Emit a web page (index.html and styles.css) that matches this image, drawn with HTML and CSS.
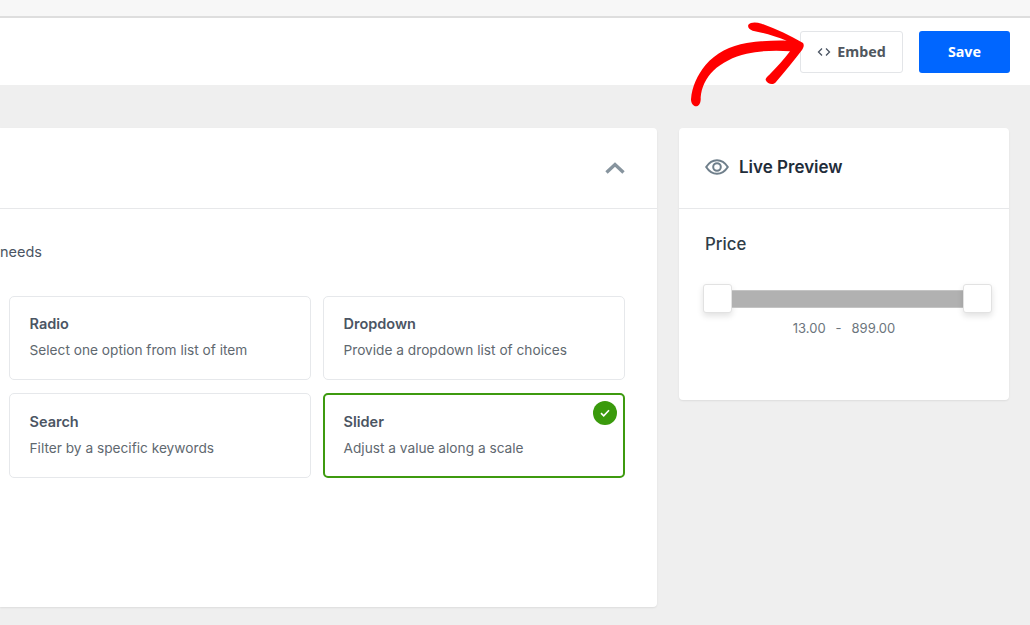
FILE: index.html
```html
<!DOCTYPE html>
<html lang="en">
<head>
<meta charset="utf-8">
<title>Filter settings</title>
<link rel="stylesheet" href="styles.css">
</head>
<body>
<div class="top-strip"></div>
<header class="toolbar">
  <button class="btn btn-embed">
    <svg class="code-icon" width="14" height="10" viewBox="0 0 14 10" fill="none" stroke="#4b5563" stroke-width="1.3"><path d="M5 1.5 1.5 5 5 8.5M9 1.5 12.5 5 9 8.5"/></svg>
    Embed
  </button>
  <button class="btn btn-save">Save</button>
</header>
<main class="content">
  <section class="card main-card">
    <div class="card-head main-head">
      <svg width="20" height="12" viewBox="0 0 20 12" fill="none" stroke="#87949e" stroke-width="3.4"><path d="M1.5 10.5 10 2.5l8.5 8"/></svg>
    </div>
    <div class="main-body">
      <p class="needs">needs</p>
      <div class="options">
        <div class="option"><h3>Radio</h3><p>Select one option from list of item</p></div>
        <div class="option"><h3>Dropdown</h3><p>Provide a dropdown list of choices</p></div>
        <div class="option"><h3>Search</h3><p>Filter by a specific keywords</p></div>
        <div class="option selected">
          <h3>Slider</h3><p>Adjust a value along a scale</p>
          <span class="check"><svg width="10" height="8" viewBox="0 0 10 8" fill="none" stroke="#fff" stroke-width="1.6"><path d="M1 4.2 3.7 6.8 9 1.2"/></svg></span>
        </div>
      </div>
    </div>
  </section>
  <aside class="card side-card">
    <div class="card-head side-head">
      <svg width="24" height="16" viewBox="0 0 24 16" fill="none" stroke="#6f7f8b" stroke-width="2"><path d="M1.2 8C4 3.6 7.6 1.2 12 1.2S20 3.6 22.8 8C20 12.4 16.4 14.8 12 14.8S4 12.4 1.2 8Z"/><circle cx="12" cy="8" r="3.8"/></svg>
      <h2>Live Preview</h2>
    </div>
    <div class="side-body">
      <h3 class="price">Price</h3>
      <div class="slider">
        <span class="handle"></span>
        <span class="track"></span>
        <span class="handle"></span>
      </div>
      <div class="range"><span>13.00</span><span>-</span><span>899.00</span></div>
    </div>
  </aside>
</main>
<svg class="arrow" width="350" height="120" viewBox="0 0 1050 360">
  <path fill="#ff0000" d="M205 74C212 66 228 66 245 71 290 86 330 108 368 128 373 132 372 142 366 150 342 182 314 216 286 248 278 256 262 252 257 240 256 234 262 230 268 224 290 202 312 178 330 154 290 150 240 152 200 161 160 170 125 188 100 212 78 234 64 262 62 292 63 304 60 316 50 319 40 320 33 310 33 298 36 260 52 226 76 196 108 158 150 138 200 129 240 123 280 121 320 122 285 108 250 98 218 92 208 88 202 82 205 74Z"/>
</svg>
</body>
</html>
```
FILE: styles.css
```css
* { box-sizing: border-box; }
html, body { margin: 0; height: 100%; }
body {
  width: 1030px;
  height: 625px;
  overflow: hidden;
  position: relative;
  background: #efefef;
  font-family: Inter, "Liberation Sans", sans-serif;
  color: #4b5563;
}
h2, h3, p { margin: 0; }
.top-strip {
  height: 18px;
  background: #f7f7f7;
  border-bottom: 2px solid #dedede;
}
.toolbar {
  height: 67px;
  background: #fff;
  display: flex;
  justify-content: flex-end;
  align-items: center;
  gap: 16px;
  padding-right: 20px;
}
.btn {
  height: 42px;
  border-radius: 3px;
  font-family: "Noto Sans", sans-serif;
  font-weight: 700;
  font-size: 14.3px;
  display: flex;
  align-items: center;
  justify-content: center;
}
.btn-embed {
  width: 103px;
  gap: 6px;
  background: #fff;
  border: 1px solid #e3e5e8;
  color: #50575e;
}
.btn-save {
  width: 91px;
  background: #0066ff;
  border: 0;
  color: #fff;
}
.content {
  display: flex;
  align-items: flex-start;
  gap: 22px;
  padding-top: 43px;
}
.card {
  background: #fff;
  border-radius: 4px;
  box-shadow: 0 1px 2px rgba(0, 0, 0, .08);
}
.main-card { width: 657px; height: 479px; border-radius: 0 4px 4px 0; }
.side-card { width: 330px; height: 272px; }
.card-head {
  height: 81px;
  border-bottom: 1px solid #e7e8ea;
  display: flex;
  align-items: center;
}
.main-head { justify-content: flex-end; padding: 0 32px 0 0; }
.side-head { gap: 10px; padding: 0 0 3px 26px; }
.side-head h2 { font-size: 17px; font-weight: 600; color: #1f2d3a; }
.main-body { padding: 34px 32px 0 9px; }
.needs { font-size: 14.5px; line-height: 18px; margin-left: -9px; color: #4b5563; }
.options {
  display: grid;
  grid-template-columns: 302px 302px;
  grid-auto-rows: 84.6px;
  gap: 12.9px 12px;
  margin-top: 34.6px;
}
.option {
  position: relative;
  border: 1px solid #e6e8eb;
  border-radius: 5px;
  padding: 18.6px 19.5px 0;
}
.option h3 { font-size: 14.5px; line-height: 18px; font-weight: 600; color: #4b5563; }
.option p { font-size: 13.7px; line-height: 18px; margin-top: 8px; color: #60686f; }
.selected { border: 2px solid #3d9a0f; padding: 17.6px 18.5px 0; }
.check {
  position: absolute;
  top: 6px;
  right: 6px;
  width: 24px;
  height: 24px;
  border-radius: 50%;
  background: #3a9a0c;
  display: flex;
  align-items: center;
  justify-content: center;
}
.side-body { padding: 25px 17px 0 24px; }
.price { font-size: 16.8px; line-height: 20px; font-weight: 500; color: #2f3d48; margin-left: 2px; }
.slider {
  display: flex;
  align-items: center;
  margin-top: 30px;
}
.handle {
  flex: none;
  width: 29px;
  height: 29px;
  background: #fff;
  border: 1px solid #e2e2e2;
  border-radius: 3px;
  box-shadow: 0 3px 6px rgba(0, 0, 0, .12);
}
.track {
  flex: 1;
  height: 18px;
  background: #b1b1b1;
  border-top: 1px solid #c4c4c4;
  border-bottom: 1px solid #c4c4c4;
}
.range {
  display: flex;
  justify-content: center;
  gap: 10px;
  margin: 6px 7px 0 0;
  font-size: 13px;
  line-height: 18px;
  color: #6c757d;
}
.arrow { position: absolute; left: 680px; top: 0; }
```
